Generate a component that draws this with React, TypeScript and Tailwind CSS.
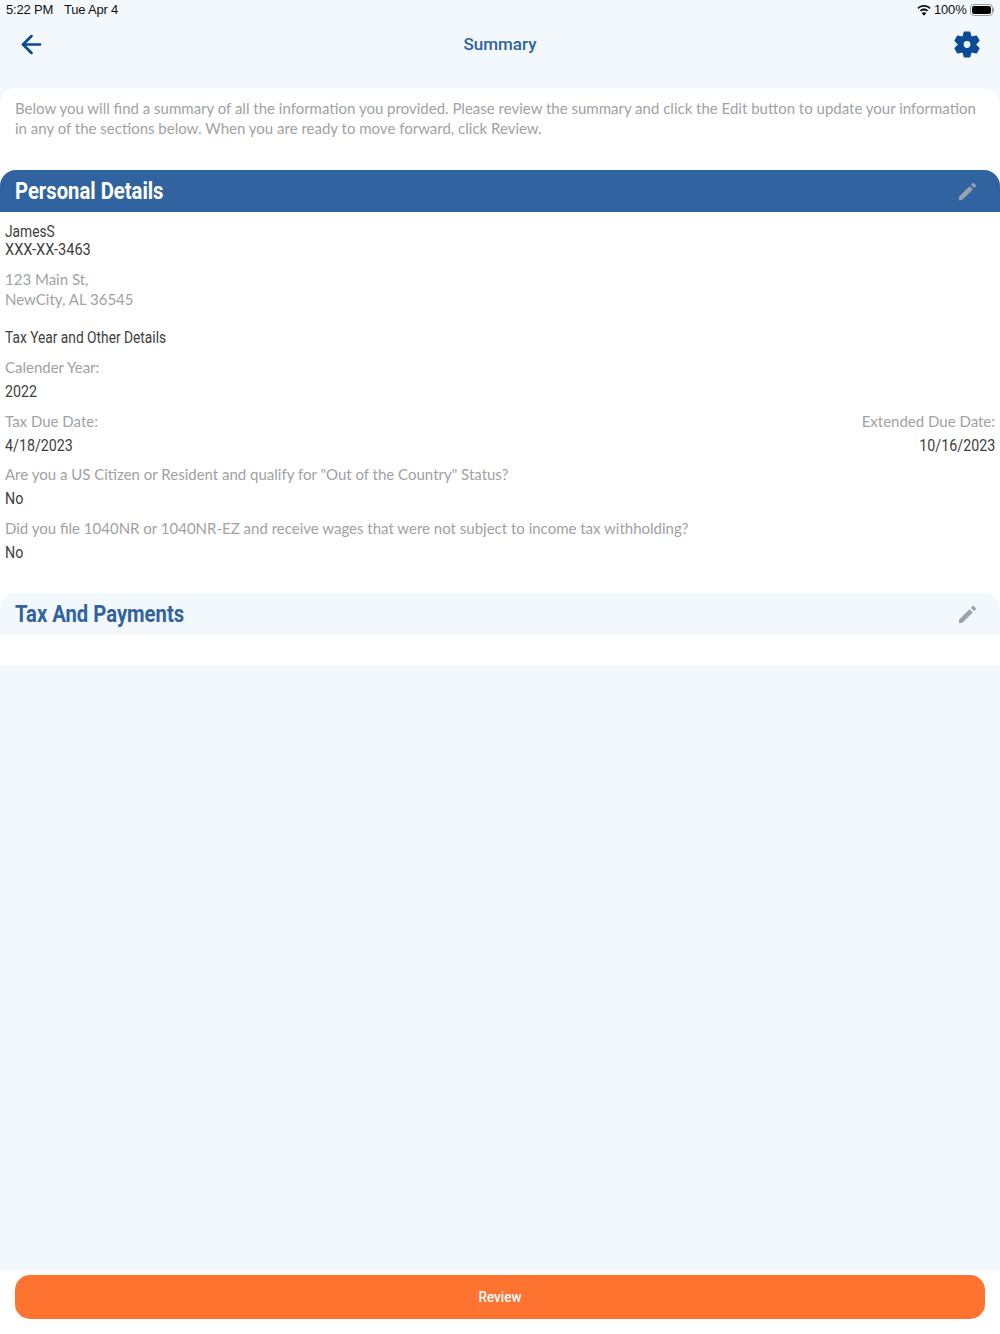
import { ArrowLeft } from "lucide-react";

const bodyFont = "font-['Lato','Open_Sans',sans-serif]";
const headFont = "font-['Roboto',sans-serif]";

function Pencil() {
  return (
    <svg width="19" height="19" viewBox="0 0 19 19" fill="#9aa3ab" className="block">
      <path d="M0.8 18.2 L1.2 14.6 L11.6 4.2 L14.8 7.4 L4.4 17.8 Z" />
      <path d="M12.9 2.9 L14.7 1.1 Q15.2 0.7 15.7 1.1 L17.9 3.3 Q18.3 3.8 17.9 4.3 L16.1 6.1 Z" />
    </svg>
  );
}

// six teeth, one pointing straight up
function gearPath() {
  const cx = 13;
  const cy = 13.5;
  const pt = (deg: number, r: number) => {
    const a = (deg * Math.PI) / 180;
    return `${(cx + r * Math.cos(a)).toFixed(2)} ${(cy + r * Math.sin(a)).toFixed(2)}`;
  };
  let d = "";
  for (let i = 0; i < 6; i++) {
    const a = -90 + i * 60;
    d += `${i === 0 ? "M" : "L"}${pt(a - 26, 8.6)} L${pt(a - 12, 12.4)} L${pt(a + 12, 12.4)} L${pt(a + 26, 8.6)} `;
  }
  return `${d}Z M${cx} ${cy - 4.2} A4.2 4.2 0 1 0 ${cx} ${cy + 4.2} A4.2 4.2 0 1 0 ${cx} ${cy - 4.2} Z`;
}

function Gear() {
  return (
    <svg width="26" height="27" viewBox="0 0 26 27" fill="#0b4a95" className="block">
      <path d={gearPath()} fillRule="evenodd" stroke="#0b4a95" strokeWidth={1.6} strokeLinejoin="round" />
    </svg>
  );
}

function Wifi() {
  return (
    <svg width="14" height="11" viewBox="0 0 14 11" fill="#111" className="block">
      <path d="M7 0C4.4 0 2.1 1 .4 2.7l1.2 1.3C2.9 2.6 4.9 1.8 7 1.8s4.1.8 5.4 2.2l1.2-1.3C11.9 1 9.6 0 7 0z" />
      <path d="M7 3.6c-1.6 0-3 .6-4.1 1.7l1.2 1.3c.8-.8 1.8-1.2 2.9-1.2s2.1.4 2.9 1.2l1.2-1.3C10 4.2 8.6 3.6 7 3.6z" />
      <path d="M7 7.2c-.9 0-1.7.4-2.3 1L7 10.8l2.3-2.6c-.6-.6-1.4-1-2.3-1z" />
    </svg>
  );
}

function Battery() {
  return (
    <div className="flex items-center">
      <div className="w-[23px] h-[12px] rounded-[3.5px] border border-[#9a9a9a] p-[1px]">
        <div className="w-full h-full rounded-[2px] bg-black" />
      </div>
      <div className="w-[1.5px] h-[4px] bg-[#9a9a9a] rounded-r-sm" />
    </div>
  );
}

function Label({ children }: { children: React.ReactNode }) {
  return <div className={`${bodyFont} text-[15px] leading-[20px] text-[#a0a2a4]`}>{children}</div>;
}

// the app uses a condensed face, so plain Roboto gets squeezed sideways
function Value({ children, squeeze = "scale-x-[0.86]", right }: { children: React.ReactNode; squeeze?: string; right?: boolean }) {
  return (
    <div className={`${headFont} text-[16px] leading-[20px] text-[#404040] ${squeeze} ${right ? "origin-right" : "origin-left"}`}>
      {children}
    </div>
  );
}

function Field({ label, value, right }: { label: string; value: string; right?: boolean }) {
  return (
    <div className={`flex flex-col gap-[5px] ${right ? "items-end" : "items-start"}`}>
      <Label>{label}</Label>
      <Value right={right} squeeze="scale-x-[0.89]">{value}</Value>
    </div>
  );
}

export default function App() {
  return (
    <div className="w-[1000px] h-[1334px] bg-[#f3f8fd] flex flex-col overflow-hidden">
      {/* status bar */}
      <div className="h-[20px] px-[6px] flex items-center justify-between font-['Liberation_Sans',sans-serif] text-[13px] tracking-[-0.2px] text-[#111]">
        <div className="flex gap-[11px]">
          <span>5:22 PM</span>
          <span>Tue Apr 4</span>
        </div>
        <div className="flex items-center gap-[3px]">
          <Wifi />
          <span>100%</span>
          <Battery />
        </div>
      </div>

      {/* nav */}
      <div className="h-[68px] pb-[20px] pl-[17px] pr-[20px] flex items-center justify-between">
        <ArrowLeft size={29} color="#0b4a95" strokeWidth={2.2} />
        <div className={`${headFont} text-[17px] font-medium text-[#2f63a4] mt-[2px]`}>Summary</div>
        <Gear />
      </div>

      {/* summary panel */}
      <div className="bg-white rounded-t-[16px]">
        <p className={`${bodyFont} h-[82px] pl-[15px] pr-[10px] pt-[10px] text-[15px] leading-[20px] text-[#a0a2a4]`}>
          Below you will find a summary of all the information you provided. Please review the summary and click the Edit button to update your information in any of the sections below. When you are ready to move forward, click Review.
        </p>

        <div className="h-[42px] bg-[#3163a1] rounded-t-[16px] pl-[15px] pr-[23px] flex items-center justify-between">
          <span className={`${headFont} inline-block origin-left scale-x-[0.88] mt-[2px] text-[23px] font-bold text-white`}>Personal Details</span>
          <Pencil />
        </div>

        <div className="h-[381px] px-[5px] pt-[10px] flex flex-col">
          <Value>JamesS</Value>
          <div className="-mt-[2px]">
            <Value squeeze="scale-x-[0.91]">XXX-XX-3463</Value>
          </div>
          <div className="mt-[9px]">
            <Label>123 Main St,</Label>
            <Label>NewCity, AL 36545</Label>
          </div>
          <div className="mt-[19px]">
            <Value>Tax Year and Other Details</Value>
          </div>
          <div className="mt-[9px] flex flex-col gap-[9px]">
            <Field label="Calender Year:" value="2022" />
            <div className="flex justify-between -mb-[1px]">
              <Field label="Tax Due Date:" value="4/18/2023" />
              <Field label="Extended Due Date:" value="10/16/2023" right />
            </div>
            <Field label={'Are you a US Citizen or Resident and qualify for "Out of the Country" Status?'} value="No" />
            <Field label="Did you file 1040NR or 1040NR-EZ and receive wages that were not subject to income tax withholding?" value="No" />
          </div>
        </div>

        <div className="h-[42px] bg-[#f3f8fd] rounded-t-[16px] pl-[15px] pr-[23px] flex items-center justify-between">
          <span className={`${headFont} inline-block origin-left scale-x-[0.88] mt-[2px] text-[23px] font-bold text-[#3163a1]`}>Tax And Payments</span>
          <Pencil />
        </div>
        <div className="h-[30px]" />
      </div>

      <div className="flex-1" />

      {/* footer */}
      <div className="h-[64px] bg-white px-[15px] pt-[5px]">
        <button className={`${headFont} w-full h-[44px] rounded-[15px] bg-[#ff7331] text-white text-[15px] font-medium`}>
          <span className="inline-block scale-x-[0.9]">Review</span>
        </button>
      </div>
    </div>
  );
}
